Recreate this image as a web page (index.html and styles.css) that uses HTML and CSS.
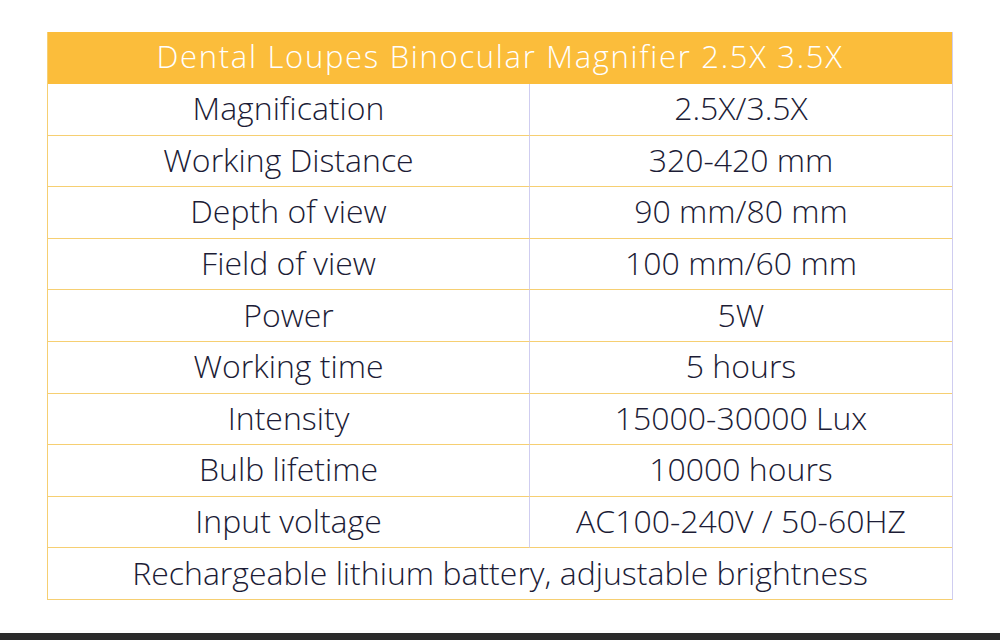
FILE: index.html
```html
<!DOCTYPE html>
<html>
<head>
<meta charset="utf-8">
<link rel="stylesheet" href="styles.css">
</head>
<body>
<div class="page">
  <div class="spec">
    <div class="head">Dental Loupes Binocular Magnifier 2.5X 3.5X</div>
    <div class="k">Magnification</div><div class="v">2.5X/3.5X</div>
    <div class="k">Working Distance</div><div class="v">320-420 mm</div>
    <div class="k">Depth of view</div><div class="v">90 mm/80 mm</div>
    <div class="k">Field of view</div><div class="v">100 mm/60 mm</div>
    <div class="k">Power</div><div class="v">5W</div>
    <div class="k">Working time</div><div class="v">5 hours</div>
    <div class="k">Intensity</div><div class="v">15000-30000 Lux</div>
    <div class="k">Bulb lifetime</div><div class="v">10000 hours</div>
    <div class="k">Input voltage</div><div class="v">AC100-240V / 50-60HZ</div>
    <div class="full">Rechargeable lithium battery, adjustable brightness</div>
  </div>
</div>
<div class="footer"></div>
</body>
</html>
```
FILE: styles.css
```css
html, body {
  margin: 0;
  padding: 0;
  background: #ffffff;
}
body {
  width: 1000px;
  height: 640px;
  display: flex;
  flex-direction: column;
  overflow: hidden;
}
.page {
  flex: 1;
  padding: 32px 47px 0 47px;
}
.spec {
  display: grid;
  grid-template-columns: 482px 1fr;
  grid-template-rows: 52px;
  grid-auto-rows: 51.6px;
  border-left: 1px solid #f6cf72;
  border-right: 1px solid #cfcdf0;
  font-family: "Open Sans", "Noto Sans", sans-serif;
  font-size: 32px;
  font-weight: 300;
  letter-spacing: 0;
  color: #1c1c36;
}
.spec > div {
  box-sizing: border-box;
  display: flex;
  align-items: center;
  justify-content: center;
  padding-bottom: 3px;
  border-bottom: 1px solid #f6cf72;
  white-space: nowrap;
}
.head {
  grid-column: 1 / 3;
  background: #fbbd3b;
  color: #ffffff;
  font-size: 31px;
  border-bottom: none !important;
  padding-bottom: 4px !important;
  letter-spacing: 1.7px;
}
.k {
  border-right: 1px solid #cfcdf0;
}
.full {
  grid-column: 1 / 3;
}
.footer {
  height: 7px;
  background: #2b2b2b;
}
```
